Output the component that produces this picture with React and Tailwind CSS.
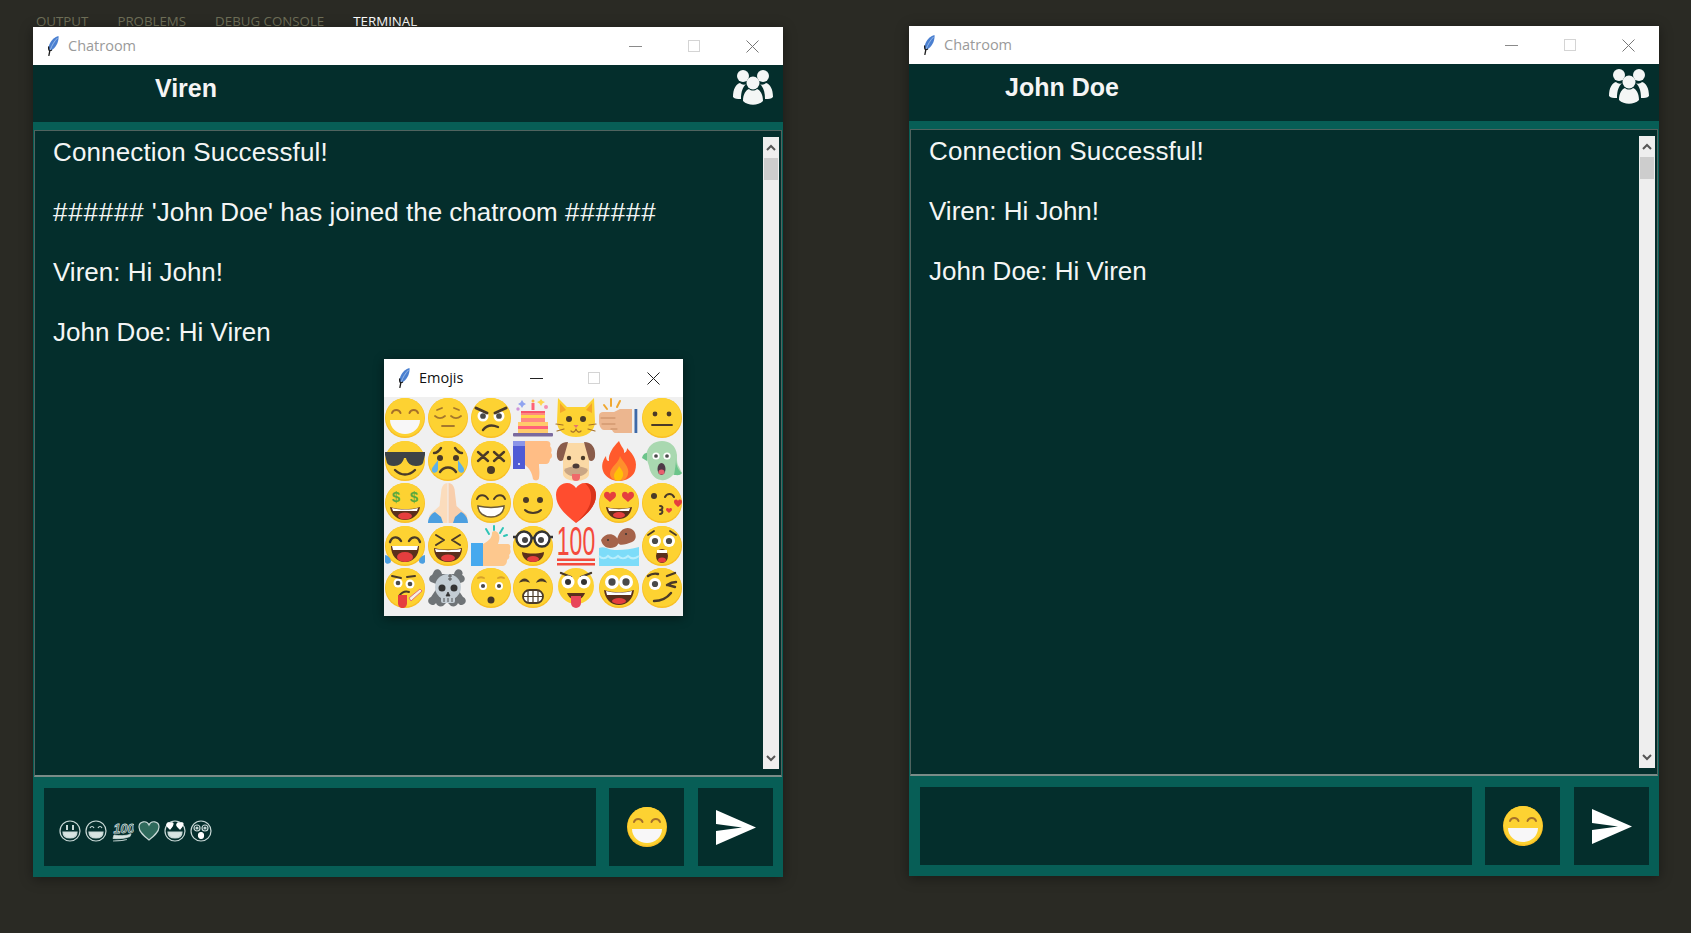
const Y = "#fdd232";
const DK = "#4a3a28";

function S({ children, size = 40 }) {
  return <svg viewBox="0 0 40 40" width={size} height={size} className="block overflow-visible">{children}</svg>;
}
const Base = () => <><circle cx="20" cy="20" r="20" fill="#f9bf24" /><circle cx="20" cy="19.3" r="19.3" fill={Y} /></>;
const Dot = ({ x, y, r = 2.4 }) => <circle cx={x} cy={y} r={r} fill={DK} />;
const Line = ({ d, w = 1.8, c = "#7a5a2c" }) => <path d={d} fill="none" stroke={c} strokeWidth={w} strokeLinecap="round" strokeLinejoin="round" />;
const Eye = ({ x, y = 15, r = 6 }) => <><circle cx={x} cy={y} r={r} fill="#fff" /><circle cx={x} cy={y} r={r * 0.52} fill="#4a4a4a" /></>;

function Grin({ size }) {
  return <S size={size}><Base /><Line d="M7 15a4.500 4.500 0 0 1 8.500 0M24.500 15a4.500 4.500 0 0 1 8.500 0" w="2" c="#a5702a" /><path d="M5 22h30c0 8-7 14-15 14S5 30 5 22Z" fill="#f8f7f8" /></S>;
}
const E = [
  () => <Grin />,
  () => <S><Base /><Line d="M7 18c3 2.500 7 2.500 10 0M23 18c3 2.500 7 2.500 10 0M9 12l5-2M31 12l-5-2M14 28h12" c="#a5782c" /></S>,
  () => <S><Base /><Eye x={12} y={18} r={5.500} /><Eye x={28} y={18} r={5.500} /><path d="M5 10l11 5M35 10l-11 5" stroke={DK} strokeWidth="3" strokeLinecap="round" /><Line d="M12 32c3-4 8-6 15-3" w="2.400" c={DK} /></S>,
  () => <S>
    <rect x="0" y="35" width="40" height="3.500" rx="1" fill="#7a6a9e" />
    <path d="M5 35V24h30v11Z" fill="#ffcb6b" /><path d="M8 24V14h24v10Z" fill="#ff8a80" />
    <rect x="8" y="17" width="24" height="3" fill="#ffd54f" /><rect x="5" y="28" width="30" height="3" fill="#ff6178" /><rect x="8" y="13" width="24" height="2" fill="#f7556b" />
    <rect x="18.500" y="5" width="3" height="7" fill="#ff6178" /><circle cx="20" cy="3" r="1.500" fill="#ffb74d" />
    <path d="M9 2l1.500 2.500L13 6l-2.500 1.500L9 10 7.500 7.500 5 6l2.500-1.500Z" fill="#90a4f0" /><path d="M28 1l1.500 2L32 4l-2.500 1.500L28 8l-1.500-2.500L24 4l2.500-1Z" fill="#ffd54f" /><circle cx="33" cy="9" r="2" fill="#f48fb1" /><circle cx="5" cy="11" r="1.700" fill="#ce93d8" />
  </S>,
  () => <S><path d="M2 0l9 9h18l9-9 1 24c0 9-9 15-19 15S1 33 1 24Z" fill={Y} /><path d="M4 5l6 7-6 3ZM36 5l-6 7 6 3Z" fill="#f4a62a" /><Dot x={13} y={21} r="3" /><Dot x={27} y={21} r="3" /><path d="M17.500 27h5L20 30Z" fill="#e57373" /><Line d="M15 33c2 2 4 1 5-2 1 3 3 4 5 2M0 26l7 1M1 33l7-2M40 26l-7 1M39 33l-7-2" w="1.200" c="#a5702a" /></S>,
  () => <S><path d="M0 18c0-3 2-4 4-4h11l6-3h12v24H17c-3 0-3-2-4-3H5c-3 0-5-5-5-8Z" fill="#ecb68f" /><rect x="35.500" y="11" width="2.800" height="24" fill="#3d69a8" /><Line d="M2 20h14M3 26h13M12 31h6" w="1" c="#c68a60" /><path d="M5 7l3 4M12 1v7M21 3l-3 6" stroke="#f0a830" strokeWidth="2" strokeLinecap="round" /></S>,
  () => <S><Base /><Dot x={13} y={16} /><Dot x={27} y={16} /><path d="M10 27h20" stroke={DK} strokeWidth="1.800" strokeLinecap="round" /></S>,

  () => <S><Base /><path d="M0 11h40v3l-2 8c-1 2-3 3-7 3-5 0-9-3-10-8h-2c-1 5-5 8-10 8-4 0-6-1-7-3L0 14Z" fill="#3e4347" /><Line d="M10 29c6 6 14 6 20 0" w="2.400" c={DK} /></S>,
  () => <S><Base /><circle cx="12" cy="17" r="3" fill={DK} /><circle cx="28" cy="17" r="3" fill={DK} /><Line d="M6 12c3 0 5-2 7-5M34 12c-3 0-5-2-7-5M12 31c4-6 12-6 16 0" w="2.400" c={DK} /><path d="M10 19c-4 6-7 8-6 11 1 3 6 2 6-2Z M30 19c4 6 7 8 6 11-1 3-6 2-6-2Z" fill="#5eb1e8" /></S>,
  () => <S><Base /><path d="M7 11l10 9M17 11 7 20M23 11l10 9M33 11l-10 9" stroke={DK} strokeWidth="2.400" strokeLinecap="round" /><circle cx="20" cy="29" r="4" fill={DK} /></S>,
  () => <S><rect x="0" y="0" width="12" height="28" fill="#4f5bd5" /><rect x="0" y="0" width="12" height="5" fill="#8b95e8" /><circle cx="6" cy="23" r="1" fill="#fff" /><path d="M12 0h22c3 0 4 3 3 5 2 2 2 5 1 7 2 2 1 5-1 6 0 3-2 5-4 5h-7c0 5 1 8 0 14 0 3-5 3-6 1-1-6-3-10-8-14Z" fill="#ffbd85" /></S>,
  () => <S><path d="M12 2h16c5 2 5 8 5 14v17c0 4-6 7-13 7S7 37 7 33V16C7 10 7 4 12 2Z" fill="#fbd9a5" /><path d="M12 1C4 1 0 7 1 16c1 4 4 5 6 3l4-14ZM28 1c8 0 12 6 11 15-1 4-4 5-6 3l-4-14Z" fill="#8a5c4a" /><Dot x={13} y={17} r="2.200" /><Dot x={27} y={17} r="2.200" /><path d="M8 29c5-5 19-5 24 0-3 9-21 9-24 0Z" fill="#c9a685" /><ellipse cx="20" cy="25" rx="3.500" ry="2.500" fill="#4a3a38" /><path d="M16 33h8v3a4 4 0 0 1-8 0Z" fill="#ef6a6a" /></S>,
  () => <S><path d="M20 0c2 6 6 8 5 12 3-1 3-4 3-5 7 7 11 14 8 23-2 6-9 10-16 10S6 36 4 30c-2-6 0-11 3-15 0 3 1 5 3 5C9 13 14 6 20 0Z" fill="#ff5a2c" /><path d="M21 15c2 5 10 11 8 18-1 5-5 7-9 7-5 0-9-3-9-7 0-7 9-11 10-18Z" fill="#ff8f2c" /><path d="M20 25c2 3 5 6 4 10-1 3-3 5-5 5s-4-2-4-5c0-4 4-6 5-10Z" fill="#ffc107" /></S>,
  () => <S><path d="M4 15C5 5 12 0 20 0s14 5 15 14c0 6 0 9 2 12l3 6c-3 3-6 1-9 2-3 3-7 6-12 5-7-1-11-7-12-14l-2-6C2 18 2 17 4 15Z" fill="#a9d8b0" /><path d="M34 17c0 6 1 11 6 15-2 3-5 2-8 2 1-6 2-11 2-17Z" fill="#6bc48a" /><path d="M0 17c1-4 3-5 5-5v8Z" fill="#6bc48a" /><Eye x={14} y={15} r={3.600} /><Eye x={25} y={15} r={3.600} /><ellipse cx="19.500" cy="28" rx="4" ry="6" fill="#4e3a48" /><ellipse cx="19.500" cy="31" rx="3" ry="2.600" fill="#e8606e" /></S>,

  () => <S><Base /><text x="11" y="19" textAnchor="middle" fontFamily="Liberation Sans" fontWeight="700" fontSize="15" fill="#5ba83f">$</text><text x="29" y="19" textAnchor="middle" fontFamily="Liberation Sans" fontWeight="700" fontSize="15" fill="#5ba83f">$</text><path d="M5 24c9 3 21 3 30 0-1 8-8 13-15 13S6 32 5 24Z" fill="#5a2f1c" /><path d="M7 25c8 2 18 2 26 0l-1 3H8Z" fill="#fff" /><ellipse cx="20" cy="33" rx="7" ry="3.500" fill="#e53e3e" /></S>,
  () => <S><path d="M19.500 13V0c-3 0-5 2-6 6l-2 17-10 9c-1 3-1 5 0 8h18Z" fill="#fbdcbc" /><path d="M20.500 13V0c3 0 5 2 6 6l2 17 10 9c1 3 1 5 0 8H20.500Z" fill="#f8ceac" /><path d="M0 40c0-5 3-9 7-11l6 5 2 6ZM40 40c0-5-3-9-7-11l-6 5-2 6Z" fill="#4c9fe0" /></S>,
  () => <S><Base /><Line d="M6 16c2-5 8-5 11 0M23 16c3-5 9-5 11 0" w="2" c={DK} /><path d="M7 23c9 2 17 2 26 0 0 7-6 11-13 11S7 30 7 23Z" fill="#fff" stroke="#6b5a3a" strokeWidth="1.500" /></S>,
  () => <S><Base /><Dot x={13} y={17} r="3" /><Dot x={27} y={17} r="3" /><Line d="M12 27c4 4 12 4 16 0" w="2" c={DK} /></S>,
  () => <S><path d="M20 40C10 32 0 24 0 12 0 4 6 0 11 0c4 0 7 2 9 5 2-3 5-5 9-5 5 0 11 4 11 12 0 12-10 20-20 28Z" fill="#ff4d2f" /><path d="M29 0c5 0 11 4 11 12 0 12-10 20-20 28 8-8 16-16 15-28 0-5-3-9-6-12Z" fill="#d9331a" /></S>,
  () => <S><Base /><path d="M11 19c-3-3-6-4-6-7 0-4 5-4 6-1 1-3 6-3 6 1 0 3-3 4-6 7ZM29 19c-3-3-6-4-6-7 0-4 5-4 6-1 1-3 6-3 6 1 0 3-3 4-6 7Z" fill="#e53e3e" /><path d="M7 24c8 2 18 2 26 0-1 7-6 12-13 12S8 31 7 24Z" fill="#5a2f1c" /><path d="M9 25c7 1.500 15 1.500 22 0l-1 3H10Z" fill="#fff" /><ellipse cx="20" cy="32" rx="6" ry="3" fill="#e53e3e" /></S>,
  () => <S><Base /><Dot x={12} y={13} r="3" /><Line d="M23 14c2-4 7-4 9 0M18 23c2 0 3 1 2 3-1 1-2 1-2 1 2 0 3 1 2 3-1 1-2 1-2 1" w="2" c={DK} /><path d="M27 30c-1.500-1.500-3-2-3-3.500 0-2 2.500-2 3-.5.500-1.500 3-1.500 3 .5 0 1.500-1.500 2-3 3.500ZM36 24c-2-2-4-3-4-5 0-3 3-3 4-1 1-2 4-2 4 1 0 2-2 3-4 5Z" fill="#e53e3e" /></S>,

  () => <S><Base /><Line d="M5 16c2-6 8-6 11-1M24 15c3-5 9-5 11 1" w="2.400" c={DK} /><path d="M6 20h28c0 10-6 16-14 16S6 30 6 20Z" fill="#5a2f1c" /><path d="M7 20h26l-1 4H8Z" fill="#fff" /><ellipse cx="20" cy="31" rx="8" ry="5" fill="#e53e3e" /><path d="M0 29c2 0 6 3 6 6 0 3-5 4-6 1ZM40 29c-2 0-6 3-6 6 0 3 5 4 6 1Z" fill="#4c9fe0" /></S>,
  () => <S><Base /><path d="M8 9l8 5-8 5M32 9l-8 5 8 5" fill="none" stroke={DK} strokeWidth="2" strokeLinecap="round" strokeLinejoin="round" /><path d="M6 22c9 2 19 2 28 0 0 9-6 14-14 14S6 31 6 22Z" fill="#5a2f1c" /><path d="M7 23c8 1.500 18 1.500 26 0l-1 3H8Z" fill="#fff" /><ellipse cx="20" cy="32" rx="7" ry="3.500" fill="#e53e3e" /></S>,
  () => <S><rect x="0" y="17" width="12" height="23" fill="#46a9ee" /><path d="M12 18c8-4 9-8 9-11 0-3 6-3 7 2 1 3 0 6-1 9h9c3 0 4 2 3 5 1 2 1 4-1 6 1 2 0 4-2 5 0 4-2 6-5 6H12Z" fill="#fdc88e" /><path d="M15 3l3 5M23 0v4M32 2l-3 5M36 9l-3 1" stroke="#2ec4b6" strokeWidth="2" strokeLinecap="round" /></S>,
  () => <S><Base /><circle cx="11" cy="13" r="7.500" fill="#fff" stroke="#333" strokeWidth="2.400" /><circle cx="29" cy="13" r="7.500" fill="#fff" stroke="#333" strokeWidth="2.400" /><path d="M0 11h4M36 11h4M18 12h4" stroke="#333" strokeWidth="2.400" /><circle cx="12" cy="14" r="3" fill="#444" /><circle cx="28" cy="14" r="3" fill="#444" /><path d="M9 26c7 2 15 2 22 0 0 6-5 10-11 10S9 32 9 26Z" fill="#5a2f1c" /><ellipse cx="20" cy="33" rx="6" ry="3" fill="#e53e3e" /></S>,
  () => <S><text transform="translate(20 29) scale(0.82 1.42)" textAnchor="middle" fontFamily="Liberation Sans" fontSize="28" fill="#f44a3c">100</text><rect x="1" y="32.500" width="38" height="2.500" fill="#f44a3c" /><rect x="1" y="37" width="38" height="2.500" fill="#f44a3c" /></S>,
  () => <S><path d="M0 22c4-2 8 0 10 1 5 2 20 1 30-2v19H0Z" fill="#7ddcf9" /><path d="M0 30c3 3 6 3 9 0 3 3 7 3 10 0 3 3 7 3 10 0 3 3 7 3 11 0" fill="none" stroke="#b8eefc" strokeWidth="2" /><path d="M2 14c3-6 10-7 14-4 4 3 5 9 0 11-6 2-12 1-14-7ZM20 8c3-7 11-8 15-3 3 5 2 9-2 11-5 2-11 4-13 2-3-2-2-6 0-10Z" fill="#a5634a" /><circle cx="9" cy="14" r="1" fill="#333" /><circle cx="27" cy="8" r="1" fill="#333" /></S>,
  () => <S><Base /><Line d="M6 9l6-4M34 9l-6-4" w="1.800" c={DK} /><Eye x={13} y={15} r={6} /><Eye x={27} y={15} r={6} /><ellipse cx="20" cy="30" rx="6" ry="7" fill="#5a2f1c" /><rect x="15" y="24" width="10" height="3" fill="#fff" /><ellipse cx="20" cy="34" rx="4" ry="2.500" fill="#e53e3e" /></S>,

  () => <S><Base /><Eye x={13} y={15} r={4.500} /><Eye x={25} y={16} r={4.500} /><Line d="M7 8l9 2M22 9l8-1M14 28c3-4 7-5 10-4" w="2" c={DK} /><path d="M13 27h9v8c0 3-2 5-4.500 5S13 38 13 35Z" fill="#e53e3e" /><path d="M24 30l11-9 2 2-11 10Z" fill="#f3efe6" stroke="#e57373" strokeWidth="1" /></S>,
  () => <S><path d="M7 2c3-2 6 0 7 4l12 0c1-4 4-6 7-4 2 2 2 4 1 5 3 1 4 5 1 7l-8 3 8 12c3 1 4 5 1 7-2 2-5 1-6-1-1 3-4 4-7 3l-4-4-4 4c-3 1-6 0-7-3-1 2-4 3-6 1-3-2-2-6 1-7l8-12-8-3c-3-2-2-6 1-7C5 6 5 4 7 2Z" fill="#6f7477" /><ellipse cx="20" cy="19" rx="13" ry="13" fill="#c3cdd4" /><rect x="13" y="28" width="14" height="7" rx="2" fill="#c3cdd4" /><circle cx="14" cy="20" r="3.500" fill="#333" /><circle cx="26" cy="20" r="3.500" fill="#333" /><path d="M20 24l-2 4h4Z M16 30v4M20 30v4M24 30v4" fill="#333" stroke="#333" strokeWidth=".8" /><path d="M22 6v7M20 8h4M20 11h4" stroke="#555" strokeWidth="1" /></S>,
  () => <S><Base /><Eye x={12} y={18} r={4} /><Eye x={28} y={18} r={4} /><circle cx="20" cy="32" r="3.500" fill={DK} /><Line d="M7 10c2-1 4-1 6 0M27 10c2-1 4-1 6 0" c="#d6a12b" /></S>,
  () => <S><Base /><path d="M6 15c2-6 9-6 11 0-3-2-8-2-11 0ZM23 15c2-6 9-6 11 0-3-2-8-2-11 0Z" fill={DK} /><rect x="10" y="22" width="20" height="13" rx="6.500" fill="#fff" stroke={DK} strokeWidth="1.800" /><path d="M15 22.500v12M20 22v13M25 22.500v12M10 28.500h20" stroke={DK} strokeWidth="1.200" /></S>,
  () => <S><circle cx="20" cy="18" r="18" fill={Y} /><Line d="M5 5l10 4M35 5l-10 4" w="2.400" c={DK} /><circle cx="12" cy="14" r="6.500" fill="#fff" /><circle cx="28" cy="14" r="6.500" fill="#fff" /><circle cx="12" cy="14" r="3" fill="#333" /><circle cx="28" cy="14" r="3" fill="#333" /><path d="M11 25h18c-1 3-3 5-5 6H16c-2-1-4-3-5-6Z" fill="#5a2f1c" /><path d="M15 28h10v7a5 5 0 0 1-10 0Z" fill="#e8455a" /></S>,
  () => <S><Base /><Eye x={13} y={14} r={7} /><Eye x={27} y={14} r={7} /><path d="M5 22c9 3 21 3 30 0-1 9-7 15-15 15S6 31 5 22Z" fill="#5a2f1c" /><path d="M7 23c8 2 18 2 26 0l-1 4H8Z" fill="#fff" /><ellipse cx="20" cy="33" rx="7" ry="3" fill="#e53e3e" /></S>,
  () => <S><Base /><Eye x={13} y={16} r={6} /><Line d="M6 8c3-2 6-3 10-2M25 8l8-3M25 17c3-2 6-3 9-3M26 17l7 2M12 33c7 0 13-3 17-8" w="2.400" c={DK} /></S>,
];

function Feather() {
  return (
    <svg viewBox="0 0 14 20" width="14" height="20" className="block shrink-0">
      <path d="M11.500 0C7.500 1 3 5 1.800 10.500c-.4 2 0 3.500.7 4.500 3.500-.8 6.200-3.800 7.800-7.500C11.200 5.300 11.800 2.500 11.500 0Z" fill="#4a7fd0" />
      <path d="M10.500 2C7.500 5 5 9 3.200 14" stroke="#a9c8ee" strokeWidth=".8" fill="none" />
      <path d="M3 14 1.800 20M1.800 10.500c-.4 2 0 3.500.7 4.500l2.500-1" stroke="#1c1c1c" strokeWidth="1.300" fill="none" />
    </svg>
  );
}

function TitleBar({ title, dark, gapStyle }) {
  return (
    <div className="h-[38px] shrink-0 bg-white flex items-center">
      <div className={`flex items-center pl-[14px] gap-[7px] flex-1 ${dark ? "text-[#111]" : "text-[#9a9a9a]"}`}>
        <Feather />
        <span className="text-[14.500px] leading-[20px] -mt-[1px] font-['Open_Sans',sans-serif]">{title}</span>
      </div>
      <div className={`flex items-center ${gapStyle || "gap-[46px] pr-[24px]"}`}>
        <div className={`w-[13px] h-px ${dark ? "bg-[#222]" : "bg-[#8a8a8a]"}`} />
        <div className="w-[12px] h-[12px] border border-[#d4d4d4]" />
        <svg viewBox="0 0 13 13" width="13" height="13" className={`block ${dark ? "ml-[2px]" : ""}`}><path d="M.5.5l12 12M12.500.5l-12 12" stroke={dark ? "#222" : "#777"} strokeWidth="1" /></svg>
      </div>
    </div>
  );
}

function People() {
  return (
    <svg viewBox="0 0 40 35" width="40" height="35" className="block" fill="#f4f6f5">
      <circle cx="10" cy="6" r="6" /><circle cx="30" cy="6" r="6" />
      <path d="M0 27c0-8 3-13 7-14 2 2 5 2 6 1-3 3-5 7-5 15-4 0-6 0-8-2ZM40 27c0-8-3-13-7-14-2 2-5 2-6 1 3 3 5 7 5 15 4 0 6 0 8-2Z" />
      <circle cx="20" cy="13" r="6.500" /><path d="M10 31c0-7 3-11 6-12 2 2 6 2 8 0 3 1 6 5 6 12-5 5-15 5-20 0Z" />
    </svg>
  );
}

function Send() {
  return <svg viewBox="0 0 40 35" width="40" height="35" className="block"><path d="M0 0 40 17.500 0 35V21l26-3.500L0 14Z" fill="#fff" /></svg>;
}

function Scrollbar() {
  return (
    <div className="w-[16px] shrink-0 my-[6px] mr-[2px] ml-auto bg-[#eeeeee] flex flex-col">
      <div className="h-[21px] flex items-center justify-center">
        <svg viewBox="0 0 10 7" width="10" height="7" className="block"><path d="M1 6l4-4 4 4" fill="none" stroke="#555" strokeWidth="2" /></svg>
      </div>
      <div className="h-[22px] mx-px bg-[#cdcdcd]" />
      <div className="flex-1" />
      <div className="h-[21px] flex items-center justify-center">
        <svg viewBox="0 0 10 7" width="10" height="7" className="block"><path d="M1 1l4 4 4-4" fill="none" stroke="#555" strokeWidth="2" /></svg>
      </div>
    </div>
  );
}

function Outline({ children }) {
  return <svg viewBox="0 0 22 22" width="22" height="22" className="block" fill="none" stroke="#c8d8d6" strokeWidth="1.200">{children}</svg>;
}
const Ring = () => <circle cx="11" cy="11" r="10" />;
const Typed = [
  () => <Outline><Ring /><path d="M8 5v5M14 5v5" strokeWidth="2" /><path d="M4 12h14c0 4-3 6-7 6s-7-2-7-6Z" fill="#d8e4e2" /></Outline>,
  () => <Outline><Ring /><path d="M5 8c1-2 3-2 4 0M13 8c1-2 3-2 4 0" /><path d="M4 12h14c0 4-3 6-7 6s-7-2-7-6Z" fill="#d8e4e2" /></Outline>,
  () => <Outline><text x="12" y="13" textAnchor="middle" fontFamily="Liberation Sans" fontStyle="italic" fontWeight="700" fontSize="12.500" strokeWidth=".8">100</text><path d="M2 15c6 1 12 1 17-1l-1 2.500c-5 2-11 2.500-17 2Z M1 21c6 0 10-.5 14-1.500" fill="#d8e4e2" strokeWidth=".8" /></Outline>,
  () => <Outline><path d="M11 20C6 16 1 12 1 7c0-6 8-7 10-2 2-5 10-4 10 2 0 5-5 9-10 13Z" fill="#2f6a5c" /></Outline>,
  () => <Outline><Ring /><path d="M6 9C4 7 2 6 3 4c1-2 3-1 3 0 0-1 3-2 3 0 0 2-1 3-3 5ZM16 9c-2-2-4-3-3-5 1-2 3-1 3 0 0-1 3-2 3 0 0 2-1 3-3 5Z" fill="#fff" stroke="#fff" /><path d="M4 12h14c0 4-3 6-7 6s-7-2-7-6Z" fill="#d8e4e2" /></Outline>,
  () => <Outline><Ring /><circle cx="7" cy="8" r="3" /><circle cx="15" cy="8" r="3" /><circle cx="7" cy="8" r="1" fill="#c8d8d6" /><circle cx="15" cy="8" r="1" fill="#c8d8d6" /><ellipse cx="11" cy="15.500" rx="2.500" ry="3" fill="#fff" stroke="#fff" /></Outline>,
];

function EmojiPicker() {
  return (
    <div className="absolute left-[351px] top-[332px] w-[299px] shadow-[0_2px_10px_rgba(0,0,0,0.45)] bg-[#f0f0f0]">
      <TitleBar title="Emojis" dark gapStyle="gap-[45px] pr-[23px]" />
      <div className="grid grid-cols-7 gap-x-[2.600px] gap-y-[2.600px] px-[1px] pt-[1px] h-[219px] content-start">
        {E.map((Em, i) => <div key={i} className="w-[40px] h-[40px]"><Em /></div>)}
      </div>
    </div>
  );
}

const Hash = () => <span className="tracking-[0.8px]">######</span>;
const First = () => <span className="tracking-[0.14px]">Connection Successful!</span>;

function ChatWindow({ name, lines, typed, picker, className }) {
  return (
    <div className={`absolute w-[750px] h-[850px] flex flex-col shadow-[0_2px_12px_rgba(0,0,0,0.4)] ${className}`}>
      <TitleBar title="Chatroom" />
      <div className="h-[57px] shrink-0 bg-[#042e2c] flex items-start">
        <div className="w-[306px] pt-[7px] text-center text-[25px] leading-[32px] font-bold text-[#f5f5f5] font-['Liberation_Sans',sans-serif]">{name}</div>
        <div className="ml-auto mr-[10px] mt-[5px]"><People /></div>
      </div>
      <div className="flex-1 min-h-0 flex flex-col bg-[#075e56] pt-[8px]">
        <div className="flex-1 min-h-0 flex bg-[#042e2c] border border-[#50635f] border-b-[#7a8c88] border-b-2 ml-px mr-px">
          <div className="pl-[18px] pt-[6px] text-[26px] leading-[30px] text-[#f4f6f5] font-['Liberation_Sans',sans-serif]">
            {lines.map((l, i) => <p key={i} className="mb-[30px] whitespace-pre">{l}</p>)}
          </div>
          <Scrollbar />
        </div>
        <div className="h-[100px] shrink-0 flex gap-[13px] p-[11px] pr-[10px]">
          <div className="flex-1 bg-[#042e2c] flex items-center gap-[4.300px] pl-[15px] pt-[8px]">
            {typed && Typed.map((T, i) => <T key={i} />)}
          </div>
          <div className="w-[75px] bg-[#042e2c] flex items-center justify-center"><Grin size={40} /></div>
          <div className="w-[75px] ml-px bg-[#042e2c] flex items-center justify-center"><Send /></div>
        </div>
      </div>
      {picker && <EmojiPicker />}
    </div>
  );
}

export default function App() {
  return (
    <div className="relative w-[1691px] h-[933px] overflow-hidden bg-[#2a2a24]">
      <div className="flex gap-[29px] pl-[36px] pt-[11px] text-[13.300px] leading-[20px] text-[#6f6f58] font-['Open_Sans',sans-serif]">
        <span>OUTPUT</span><span>PROBLEMS</span><span>DEBUG CONSOLE</span><span className="text-white">TERMINAL</span>
      </div>
      <ChatWindow
        className="left-[33px] top-[27px]"
        name="Viren"
        typed
        picker
        lines={[<First />, <><Hash /> 'John Doe' has joined the chatroom <Hash /></>, "Viren: Hi John!", "John Doe: Hi Viren"]}
      />
      <ChatWindow
        className="left-[909px] top-[26px]"
        name="John Doe"
        lines={[<First />, "Viren: Hi John!", "John Doe: Hi Viren"]}
      />
    </div>
  );
}
